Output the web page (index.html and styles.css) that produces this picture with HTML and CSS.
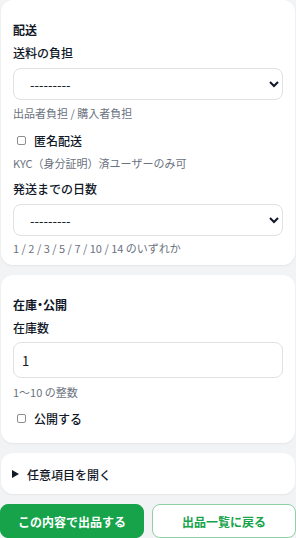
FILE: index.html
```html
<!DOCTYPE html>
<html lang="ja">
<head>
<meta charset="utf-8">
<title>出品</title>
<link rel="stylesheet" href="styles.css">
</head>
<body>
<main class="page">
  <section class="card card-ship">
    <h2 class="card-title">配送</h2>
    <label class="field-label lbl-first" for="fee">送料の負担</label>
    <select id="fee" class="control select"><option>---------</option></select>
    <p class="help help-after-control">出品者負担 / 購入者負担</p>
    <label class="check-row check-ship"><input type="checkbox" class="check"><span>匿名配送</span></label>
    <p class="help help-kyc">KYC（身分証明）済ユーザーのみ可</p>
    <label class="field-label lbl-days" for="days">発送までの日数</label>
    <select id="days" class="control select"><option>---------</option></select>
    <p class="help help-days">1 / 2 / 3 / 5 / 7 / 10 / 14 のいずれか</p>
  </section>

  <section class="card card-stock">
    <h2 class="card-title title-halt">在庫・公開</h2>
    <label class="field-label lbl-first" for="stock">在庫数</label>
    <input id="stock" class="control input" type="text" value="1">
    <p class="help help-stock">1～10 の整数</p>
    <label class="check-row check-public"><input type="checkbox" class="check"><span>公開する</span></label>
  </section>

  <section class="card card-more">
    <div class="more-row"><span class="tri"></span><span>任意項目を開く</span></div>
  </section>

  <div class="actions">
    <button class="btn btn-primary" type="button">この内容で出品する</button>
    <button class="btn btn-outline" type="button">出品一覧に戻る</button>
  </div>
</main>
</body>
</html>
```
FILE: styles.css
```css
* { box-sizing: border-box; }
html, body {
  margin: 0;
  padding: 0;
  background: #f2f3f5;
}
body {
  font-family: "Noto Sans CJK JP", "Noto Sans", sans-serif;
  color: #111827;
  width: 296px;
  height: 538px;
  overflow: hidden;
}
.page {
  display: flex;
  flex-direction: column;
  gap: 10px;
}
.card {
  background: #ffffff;
  border-radius: 12px;
  margin: 0 1px;
  box-shadow: 0 1px 2px rgba(0, 0, 0, 0.06);
  display: flex;
  flex-direction: column;
  align-items: stretch;
}
.card-ship { padding: 21px 12px 9px; height: 265px; }
.card-stock { padding: 21px 12px 15px; height: 168px; }
.card-more { padding: 12px 11px 11px; height: 41px; }

.card-title {
  margin: 0;
  font-size: 12px;
  line-height: 18px;
  font-weight: 700;
}
.title-halt {
  font-feature-settings: "halt";
}
.field-label {
  display: block;
  font-size: 12px;
  line-height: 18px;
  font-weight: 500;
}
.lbl-first { margin-top: 5px; }
.lbl-days { margin-top: 9px; }

.control {
  display: block;
  width: 100%;
  margin-top: 6px;
  border: 1px solid #dfe1e5;
  border-radius: 8px;
  background: #fff;
  font-family: inherit;
  font-size: 13px;
  color: #111827;
}
.select {
  height: 32px;
  padding: 0 8px 0 12px;
}
.input {
  height: 36px;
  padding: 0 8px;
  margin-top: 5px;
}
.help {
  margin: 0;
  font-size: 11px;
  line-height: 16px;
  color: #6b7280;
}
.help-after-control { margin-top: 5px; }
.help-kyc { margin-top: 6px; }
.help-days { margin-top: 4px; }
.help-stock { margin-top: 6px; }

.check-row {
  display: flex;
  align-items: center;
  height: 18px;
  font-size: 12px;
  font-weight: 500;
}
.check-ship { margin-top: 10px; }
.check-public { margin-top: 9px; }
.check {
  appearance: none;
  -webkit-appearance: none;
  width: 9px;
  height: 9px;
  margin: 0 8px 0 4px;
  border: 1px solid #8e8e8e;
  border-radius: 2px;
  background: #fff;
}

.more-row {
  display: flex;
  align-items: center;
  height: 18px;
  font-size: 12px;
  font-weight: 500;
}
.tri {
  width: 0;
  height: 0;
  border-left: 7px solid #111827;
  border-top: 4.5px solid transparent;
  border-bottom: 4.5px solid transparent;
  margin-right: 8px;
}

.actions {
  display: grid;
  grid-template-columns: 144px 144px;
  gap: 8px;
}
.btn {
  height: 34px;
  border-radius: 8px;
  font-family: inherit;
  font-size: 12px;
  font-weight: 700;
  padding: 0;
}
.btn-primary {
  background: #16a34a;
  border: 1px solid #16a34a;
  color: #ffffff;
}
.btn-outline {
  background: #ffffff;
  border: 1px solid #8fcfa6;
  color: #16a34a;
}
```
